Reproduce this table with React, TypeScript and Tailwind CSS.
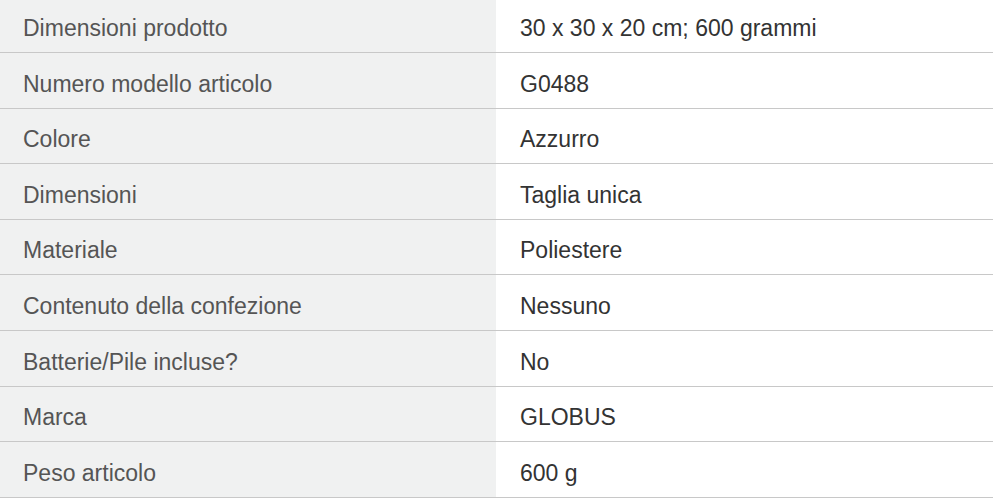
import React from "react";

const rows: [string, string][] = [
  ["Dimensioni prodotto", "30 x 30 x 20 cm; 600 grammi"],
  ["Numero modello articolo", "G0488"],
  ["Colore", "Azzurro"],
  ["Dimensioni", "Taglia unica"],
  ["Materiale", "Poliestere"],
  ["Contenuto della confezione", "Nessuno"],
  ["Batterie/Pile incluse?", "No"],
  ["Marca", "GLOBUS"],
  ["Peso articolo", "600 g"],
];

export default function App() {
  return (
    <div
      className="w-[1000px] h-[499px] overflow-hidden bg-white"
      style={{ fontFamily: '"Liberation Sans", Arial, sans-serif' }}
    >
      <div className="w-[993px] mt-[-2.6px]">
        {rows.map(([k, v]) => (
          <div key={k} className="flex h-[55.6px] border-b-[1.5px] border-[#c8c8c8]">
            <div className="w-[496px] bg-[#f0f1f1] flex items-center pl-[23px] pt-[7px] text-[23px] text-[#555555]">
              {k}
            </div>
            <div className="flex-1 flex items-center pl-[24px] pt-[7px] text-[23px] text-[#333333]">
              {v}
            </div>
          </div>
        ))}
      </div>
    </div>
  );
}
